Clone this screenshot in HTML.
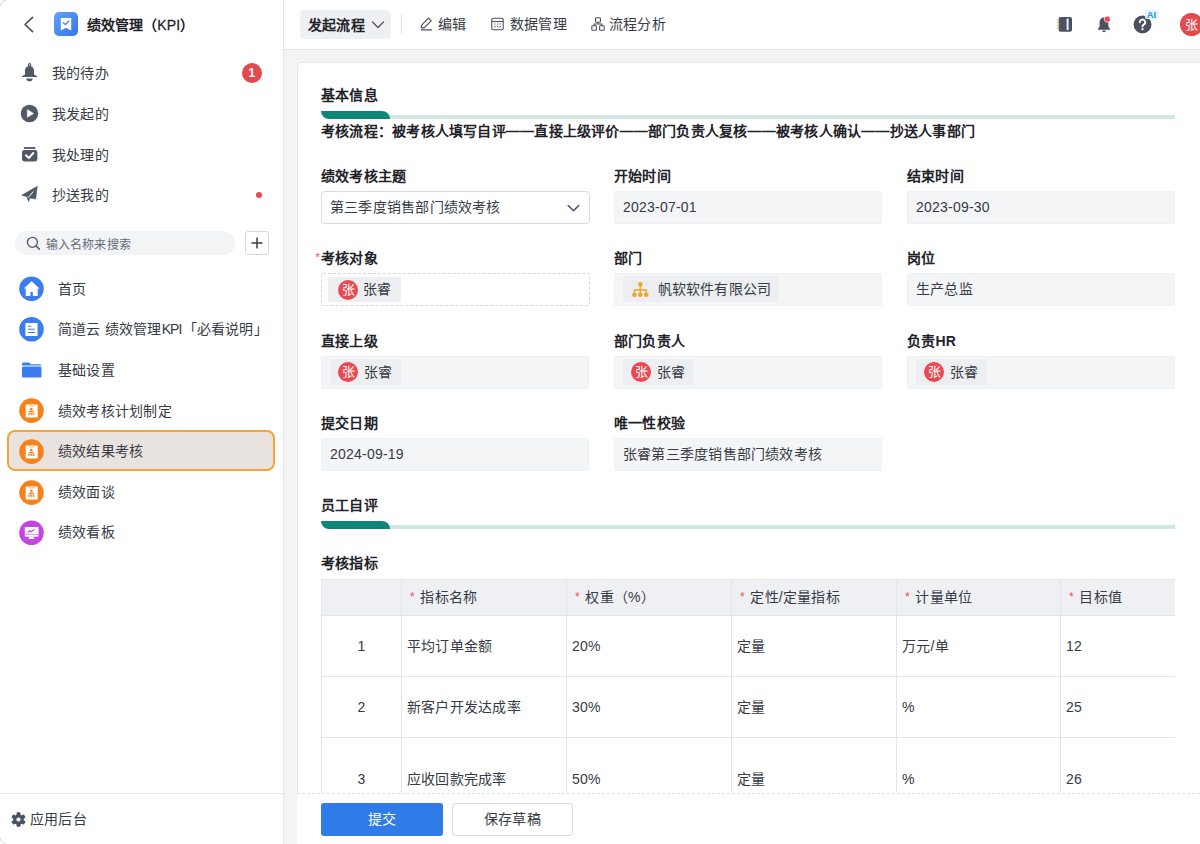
<!DOCTYPE html>
<html lang="zh-CN"><head><meta charset="utf-8">
<style>
*{box-sizing:border-box;margin:0;padding:0}
html,body{width:1200px;height:844px;overflow:hidden;background:#f3f4f6;font-family:"Liberation Sans",sans-serif;color:#1f2329;font-size:14px;letter-spacing:0.22px}
.abs{position:absolute}
#side{position:absolute;left:0;top:0;width:284px;height:844px;background:#fff;border-right:1px solid #e4e6ea;}
.mi{position:absolute;left:52px;font-size:14px;line-height:20px;color:#363b45;white-space:nowrap}
.ic{position:absolute}
#hdr{position:absolute;left:284px;top:0;width:916px;height:50px;background:#fff;border-bottom:1px solid #e4e6ea}
.ht{position:absolute;top:14px;font-size:14px;line-height:20px;color:#363b45;white-space:nowrap}
#card{position:absolute;left:297px;top:62px;width:920px;height:800px;background:#fff;border:1px solid #e6e8eb;border-radius:4px}
.sec{position:absolute;left:321px;font-size:14px;font-weight:bold;line-height:20px;color:#1f2329;white-space:nowrap}
.lbl{position:absolute;font-size:14px;font-weight:bold;line-height:20px;color:#1f2329;white-space:nowrap}
.fld{position:absolute;height:33px;width:268px;background:#f4f5f7;border:1px solid #eff0f3;border-radius:2px;font-size:14px;line-height:31px;padding-left:8px;color:#363b45;white-space:nowrap}
.chip{position:absolute;top:2px;left:7.5px;height:26px;background:#eceef1;border-radius:3px;padding:0 9px 0 8px;line-height:26px;font-size:14px;white-space:nowrap}
.chip.d{top:3px;left:5.5px;height:25px;line-height:25px;padding:0 10px;border-radius:1px}
.chip.d .av{margin-right:4.5px;margin-top:2.5px}
.av{display:inline-block;width:20.5px;height:20.5px;border-radius:50%;background:#e9494f;color:#fff;font-size:13px;line-height:20.5px;text-align:center;vertical-align:top;margin-top:2.75px;margin-right:6px;letter-spacing:0;text-indent:0.5px}
.tbar{position:absolute;left:321px;width:854px;height:4px;background:linear-gradient(90deg,transparent 0,transparent 60px,#cfe6e3 60px)}
.tbar i{position:absolute;left:0;bottom:0;width:69px;height:8px;background:#0b8677;border-radius:0 8px 0 8px}
table{border-collapse:collapse;position:absolute;left:321px;top:579px;table-layout:fixed}
td,th{border:1px solid #e3e5e8;font-size:14px;font-weight:normal;color:#363b45;text-align:left;padding-left:5px;white-space:nowrap;line-height:20px}
th{background:#eff0f3;height:36px;padding-left:8px}
th b{color:#ef4f4f;font-weight:normal;font-size:12px;margin-right:5.5px;position:relative;top:-1px}
td{height:61px}
</style></head><body>

<div id="side">
  <svg class="ic" style="left:0;top:0" width="8" height="8" viewBox="0 0 8 8"><path d="M0.5 6 A5.5 5.5 0 0 1 6 0.5" fill="none" stroke="#d9dbdf" stroke-width="1"/></svg>
  <svg class="ic" style="left:0;top:836px" width="8" height="8" viewBox="0 0 8 8"><path d="M0.5 2 A5.5 5.5 0 0 0 6 7.5" fill="none" stroke="#d9dbdf" stroke-width="1"/></svg>
  <!-- back chevron -->
  <svg class="ic" style="left:22px;top:15px" width="14" height="19" viewBox="0 0 14 19"><path d="M10.5 2.3 L3 9.5 L10.5 16.7" fill="none" stroke="#4b5160" stroke-width="1.7" stroke-linecap="round" stroke-linejoin="round"/></svg>
  <!-- app icon -->
  <svg class="ic" style="left:54px;top:12px" width="24" height="24" viewBox="0 0 24 24"><defs><linearGradient id="g1" x1="0" y1="0" x2="1" y2="1"><stop offset="0" stop-color="#67a3f8"/><stop offset="1" stop-color="#2f74ea"/></linearGradient></defs><rect width="24" height="24" rx="5" fill="url(#g1)"/><path d="M6.8 6 H17.2 V18.5 L12 15.8 L6.8 18.5 Z" fill="#fff"/><path d="M9.3 10.8 L11.3 12.6 L14.8 9.3" fill="none" stroke="#3d84ef" stroke-width="1.3" stroke-linecap="round" stroke-linejoin="round"/></svg>
  <div class="abs" style="left:86.5px;top:15px;font-size:14px;font-weight:bold;line-height:20px;color:#1f2329;white-space:nowrap;letter-spacing:0.15px">绩效管理（<span style="font-weight:normal;-webkit-text-stroke:0.3px #1f2329">KPI</span>）</div>

  <!-- my todo -->
  <svg class="ic" style="left:21px;top:63px" width="17" height="19" viewBox="0 0 17 19"><circle cx="8.5" cy="1.9" r="1.25" fill="none" stroke="#525866" stroke-width="1.1"/><path d="M8.5 2.9 C5.4 2.9 4 5.2 4 7.6 V11.4 L1 13.2 V14.1 H16 V13.2 L13 11.4 V7.6 C13 5.2 11.6 2.9 8.5 2.9 Z" fill="#525866"/><path d="M5.3 15.4 H11.7 A3.2 2.8 0 0 1 5.3 15.4 Z" fill="#525866"/></svg>
  <div class="mi" style="top:63px">我的待办</div>
  <div class="abs" style="left:242px;top:63px;width:20px;height:20px;border-radius:50%;background:#e5484d;color:#fff;font-size:12px;font-weight:bold;line-height:20px;text-align:center">1</div>

  <svg class="ic" style="left:20px;top:104px" width="19" height="19" viewBox="0 0 19 19"><circle cx="9.5" cy="9.5" r="8.7" fill="#525866"/><path d="M7.4 5.6 L13.6 9.5 L7.4 13.3 Z" fill="#fff" stroke="#fff" stroke-width="0.5" stroke-linejoin="round"/></svg>
  <div class="mi" style="top:104px">我发起的</div>

  <svg class="ic" style="left:21px;top:146px" width="17" height="17" viewBox="0 0 17 17"><rect x="2.9" y="0.9" width="11.6" height="2" rx="0.6" fill="#5d636f"/><rect x="1" y="4" width="15.4" height="11.5" rx="2.4" fill="#525866"/><path d="M4.9 9.3 L7.9 12 L12.3 7" fill="none" stroke="#fff" stroke-width="1.9" stroke-linecap="round" stroke-linejoin="round"/></svg>
  <div class="mi" style="top:145px">我处理的</div>

  <svg class="ic" style="left:21px;top:185px" width="17" height="17" viewBox="0 0 17 17"><path d="M16.3 1.2 L0.6 10.2 L5.9 11.7 L7.4 16.6 L9 13.1 L14.7 14.1 Z" fill="#525866" stroke="#525866" stroke-width="0.5" stroke-linejoin="round"/><path d="M12.2 6.6 L7.2 12.6" stroke="#fff" stroke-width="1"/></svg>
  <div class="mi" style="top:185px">抄送我的</div>
  <div class="abs" style="left:256px;top:192px;width:6px;height:6px;border-radius:50%;background:#e5484d"></div>

  <!-- search -->
  <div class="abs" style="left:15px;top:231px;width:220px;height:24px;border-radius:12px;background:#f3f4f6"></div>
  <svg class="ic" style="left:26px;top:236px" width="15" height="15" viewBox="0 0 15 15"><circle cx="6.4" cy="6.3" r="5" fill="none" stroke="#575d68" stroke-width="1.35"/><path d="M10 9.9 L13.4 13.3" stroke="#575d68" stroke-width="1.5" stroke-linecap="round"/></svg>
  <div class="abs" style="left:45.5px;top:236.5px;font-size:12px;line-height:16px;color:#656b76;white-space:nowrap">输入名称来搜索</div>
  <div class="abs" style="left:245px;top:231px;width:24px;height:24px;border:1px solid #d5d8dd;border-radius:3px"></div>
  <svg class="ic" style="left:250px;top:236px" width="14" height="14" viewBox="0 0 14 14"><path d="M7 1.5 V12.5 M1.5 7 H12.5" stroke="#3b3f48" stroke-width="1.5"/></svg>

  <!-- app menu -->
  <svg class="ic" style="left:19px;top:276px" width="25" height="25" viewBox="0 0 25 25"><circle cx="12.5" cy="12.8" r="12.3" fill="#3b7ded"/><path d="M12.6 5.3 L20.5 12.6 H18.7 V19.9 H13.8 V16 H11.4 V19.9 H6.7 V12.6 H4.8 Z" fill="#fff"/></svg>
  <div class="mi" style="left:58px;top:279px">首页</div>

  <svg class="ic" style="left:19px;top:317px" width="25" height="25" viewBox="0 0 25 25"><circle cx="12.5" cy="12.3" r="12.3" fill="#3b7ded"/><rect x="6.4" y="6" width="12.2" height="13" rx="0.6" fill="#fff"/><path d="M8.9 9.3 H12.3 M8.9 12.2 H15.9 M8.9 15.5 H15.9" stroke="#3b7ded" stroke-width="1"/></svg>
  <div class="mi" style="left:58px;top:319px">简道云 绩效管理<span style="letter-spacing:-0.9px;margin-right:1px">KPI</span>「必看说明」</div>

  <svg class="ic" style="left:22px;top:362px" width="20" height="16" viewBox="0 0 20 16"><path d="M1.5 0.5 H7.2 L8.8 2.3 H18 a1.5 1.5 0 0 1 1.5 1.5 V3.6 H0 V2 a1.5 1.5 0 0 1 1.5 -1.5z" fill="#3b7ded"/><rect x="0" y="4.4" width="19.5" height="11.1" rx="1.3" fill="#3b7ded"/></svg>
  <div class="mi" style="left:58px;top:360px">基础设置</div>

  <svg class="ic" style="left:19px;top:398px" width="25" height="25" viewBox="0 0 25 25"><circle cx="12.5" cy="12.6" r="12.3" fill="#f7821a"/><rect x="6.7" y="6.6" width="12" height="12.8" rx="0.4" fill="#fff"/><rect x="10.2" y="5.9" width="5" height="1.9" rx="0.9" fill="#fff" stroke="#f7821a" stroke-width="0.6"/><circle cx="12.3" cy="11" r="1.3" fill="#f7821a"/><path d="M10.1 12.8 H14.6 L15.7 16.7 H9 Z" fill="#f7821a"/><path d="M9 14.6 H15.7 M11.2 14.6 V16.8 M13.5 14.6 V16.8" stroke="#fff" stroke-width="0.6"/></svg>
  <div class="mi" style="left:58px;top:401px">绩效考核计划制定</div>

  <div class="abs" style="left:7px;top:430px;width:268px;height:41px;border-radius:8px;background:#e8e3de;border:2px solid #f6a43a"></div>
  <svg class="ic" style="left:19px;top:439px" width="25" height="25" viewBox="0 0 25 25"><circle cx="12.5" cy="12.6" r="12.3" fill="#f7821a"/><rect x="6.7" y="6.6" width="12" height="12.8" rx="0.4" fill="#fff"/><rect x="10.2" y="5.9" width="5" height="1.9" rx="0.9" fill="#fff" stroke="#f7821a" stroke-width="0.6"/><circle cx="12.3" cy="11" r="1.3" fill="#f7821a"/><path d="M10.1 12.8 H14.6 L15.7 16.7 H9 Z" fill="#f7821a"/><path d="M9 14.6 H15.7 M11.2 14.6 V16.8 M13.5 14.6 V16.8" stroke="#fff" stroke-width="0.6"/></svg>
  <div class="mi" style="left:58px;top:441px">绩效结果考核</div>

  <svg class="ic" style="left:19px;top:480px" width="25" height="25" viewBox="0 0 25 25"><circle cx="12.5" cy="12.6" r="12.3" fill="#f7821a"/><rect x="6.7" y="6.6" width="12" height="12.8" rx="0.4" fill="#fff"/><rect x="10.2" y="5.9" width="5" height="1.9" rx="0.9" fill="#fff" stroke="#f7821a" stroke-width="0.6"/><circle cx="12.3" cy="11" r="1.3" fill="#f7821a"/><path d="M10.1 12.8 H14.6 L15.7 16.7 H9 Z" fill="#f7821a"/><path d="M9 14.6 H15.7 M11.2 14.6 V16.8 M13.5 14.6 V16.8" stroke="#fff" stroke-width="0.6"/></svg>
  <div class="mi" style="left:58px;top:482px">绩效面谈</div>

  <svg class="ic" style="left:19px;top:520px" width="25" height="25" viewBox="0 0 25 25"><circle cx="12.5" cy="12.7" r="12.3" fill="#c445e0"/><rect x="5.8" y="7.1" width="13.7" height="9.6" rx="0.4" fill="#fff"/><path d="M5.8 14.4 H19.5" stroke="#c445e0" stroke-width="0.6"/><path d="M9 12.3 L10.9 10.5 L12.3 11.9 L15.2 9.4" fill="none" stroke="#c445e0" stroke-width="1.1" stroke-linecap="round" stroke-linejoin="round"/><path d="M10.5 16.7 H14.3 L15.7 18.9 H9.1 Z" fill="#fff"/></svg>
  <div class="mi" style="left:58px;top:522px">绩效看板</div>

  <!-- bottom -->
  <div class="abs" style="left:0;top:793px;width:283px;height:1px;background:#e4e6ea"></div>
  <svg class="ic" style="left:11px;top:812px" width="15" height="15" viewBox="0 0 15 15"><g fill="#4b5160" transform="translate(7.5 7.5)"><circle r="5.2"/><rect x="-1.9" y="-7.2" width="3.8" height="3.4" rx="0.6"/><rect x="-1.9" y="-7.2" width="3.8" height="3.4" rx="0.6" transform="rotate(60)"/><rect x="-1.9" y="-7.2" width="3.8" height="3.4" rx="0.6" transform="rotate(120)"/><rect x="-1.9" y="-7.2" width="3.8" height="3.4" rx="0.6" transform="rotate(180)"/><rect x="-1.9" y="-7.2" width="3.8" height="3.4" rx="0.6" transform="rotate(240)"/><rect x="-1.9" y="-7.2" width="3.8" height="3.4" rx="0.6" transform="rotate(300)"/></g><circle cx="7.5" cy="7.5" r="2.1" fill="#fff"/></svg>
  <div class="abs" style="left:30px;top:809px;font-size:14px;line-height:20px;color:#363b45;white-space:nowrap">应用后台</div>
</div>

<div id="hdr">
  <div class="abs" style="left:16px;top:10px;width:91px;height:29px;border-radius:4px;background:#eef0f3"></div>
  <div class="ht" style="left:24px;top:15px;font-weight:bold;color:#1f2329">发起流程</div>
  <svg class="ic" style="left:87px;top:20px" width="14" height="10" viewBox="0 0 14 10"><path d="M1.5 2 L7 7.5 L12.5 2" fill="none" stroke="#4b5160" stroke-width="1.2" stroke-linecap="round" stroke-linejoin="round"/></svg>
  <div class="abs" style="left:117px;top:14px;width:1px;height:20px;background:#dcdfe4"></div>
  <svg class="ic" style="left:136px;top:17px" width="13" height="14" viewBox="0 0 13 14"><path d="M1 12.8 H12 M1.3 10.8 L1.6 8.2 L8.6 1.2 L11.2 3.8 L4.2 10.8 Z" fill="none" stroke="#4b5160" stroke-width="1.2" stroke-linejoin="round"/></svg>
  <div class="ht" style="left:154px">编辑</div>
  <svg class="ic" style="left:207px;top:17px" width="13" height="14" viewBox="0 0 13 14"><rect x="0.8" y="1.3" width="11.4" height="11.4" rx="1.2" fill="none" stroke="#4b5160" stroke-width="1.1"/><path d="M1 4.5 H12" stroke="#4b5160" stroke-width="1.1"/><path d="M3.3 7 h1.2 M6 7 h1.2 M8.6 7 h1.2 M3.3 9.6 h1.2 M6 9.6 h1.2 M8.6 9.6 h1.2" stroke="#4b5160" stroke-width="1.1"/></svg>
  <div class="ht" style="left:226px">数据管理</div>
  <svg class="ic" style="left:307px;top:17px" width="14" height="14" viewBox="0 0 14 14"><rect x="4.6" y="0.8" width="4.8" height="4.4" rx="0.8" fill="none" stroke="#4b5160" stroke-width="1.1"/><rect x="0.8" y="8.8" width="4.6" height="4.4" rx="0.8" fill="none" stroke="#4b5160" stroke-width="1.1"/><rect x="8.6" y="8.8" width="4.6" height="4.4" rx="0.8" fill="none" stroke="#4b5160" stroke-width="1.1"/><path d="M7 5.2 V7 M3.1 8.8 V7 H10.9 V8.8" fill="none" stroke="#4b5160" stroke-width="1.1"/></svg>
  <div class="ht" style="left:325px">流程分析</div>

  <!-- right icons -->
  <svg class="ic" style="left:772px;top:16px" width="17" height="17" viewBox="0 0 17 17"><rect x="2.6" y="1" width="13.4" height="14.8" rx="2" fill="#4b5160"/><rect x="10.6" y="2.6" width="2" height="11.4" rx="0.5" fill="#eef5ff"/><path d="M0.9 4 h2.6 M0.9 6.7 h2.6 M0.9 9.4 h2.6 M0.9 12.1 h2.6" stroke="#dfa95a" stroke-width="0.9"/></svg>
  <svg class="ic" style="left:812.5px;top:16px" width="15" height="17" viewBox="0 0 15 17"><path d="M7 1.4 C4.3 1.4 2.6 3.6 2.6 6.4 V10.4 L0.9 13 V13.8 H13.1 V13 L11.4 10.4 V6.4 C11.4 3.6 9.7 1.4 7 1.4Z" fill="#4b5160"/><path d="M5.1 14.6 H8.9 A1.9 1.7 0 0 1 5.1 14.6Z" fill="#4b5160"/><circle cx="10.3" cy="3.2" r="3.1" fill="#e9494f" stroke="#fff" stroke-width="0.7"/></svg>
  <svg class="ic" style="left:849px;top:15px" width="19" height="19" viewBox="0 0 19 19"><circle cx="9.5" cy="9.5" r="9" fill="#4b5160"/><path d="M6.8 7.3 a2.7 2.7 0 1 1 3.8 2.4 c-0.8 0.4 -1.1 0.9 -1.1 1.7" fill="none" stroke="#fff" stroke-width="1.9" stroke-linecap="round"/><circle cx="9.5" cy="14.2" r="1.15" fill="#fff"/></svg>
  <div class="abs" style="left:860.5px;top:10px;width:14px;height:8.5px;border-radius:2px;background:#e3f5fa;font-size:9.5px;font-weight:bold;line-height:9px;text-align:center;letter-spacing:0;color:#2b95e0">AI</div>
  <div class="abs" style="left:896px;top:13px;width:23px;height:23px;border-radius:50%;background:#e5484d;color:#fff;font-size:13px;line-height:23px;text-align:center">张</div>
</div>

<div id="card"></div>

<div class="sec" style="top:85px">基本信息</div>
<div class="tbar" style="top:115px"><i></i></div>
<div class="sec" style="top:121px">考核流程：被考核人填写自评——直接上级评价——部门负责人复核——被考核人确认——抄送人事部门</div>

<div class="lbl" style="left:321px;top:166px">绩效考核主题</div>
<div class="fld" style="left:321px;top:191px;width:269px;background:#fff;border:1px solid #d9dce1;border-radius:4px">第三季度销售部门绩效考核
  <svg style="position:absolute;left:244.5px;top:12px" width="13" height="9" viewBox="0 0 13 9"><path d="M1.2 1.5 L6.5 6.8 L11.8 1.5" fill="none" stroke="#4b5160" stroke-width="1.45" stroke-linecap="round" stroke-linejoin="round"/></svg></div>
<div class="lbl" style="left:614px;top:166px">开始时间</div>
<div class="fld" style="left:614px;top:191px">2023-07-01</div>
<div class="lbl" style="left:907px;top:166px">结束时间</div>
<div class="fld" style="left:907px;top:191px">2023-09-30</div>

<div class="abs" style="left:315.5px;top:252px;font-size:11px;line-height:11px;color:#ef4f4f">*</div>
<div class="lbl" style="left:321px;top:248px">考核对象</div>
<div class="fld" style="left:321px;top:273px;width:269px;background:#fff;border:1px dashed #d3d6db"><div class="chip d"><span class="av">张</span>张睿</div></div>
<div class="lbl" style="left:614px;top:248px">部门</div>
<div class="fld" style="left:614px;top:273px"><div class="chip" style="padding-left:10px;padding-right:7px"><svg style="position:absolute;left:9.5px;top:5.5px" width="17" height="16" viewBox="0 0 17 16"><g fill="#f1a51d"><circle cx="8.3" cy="2.3" r="2.2"/><circle cx="2.4" cy="12.8" r="2.3"/><circle cx="8.3" cy="12.8" r="2.3"/><circle cx="14.2" cy="12.8" r="2.3"/></g><path d="M8.3 3 V12 M2.4 12 V8 H14.2 V12" fill="none" stroke="#f1a51d" stroke-width="1.3"/></svg><span style="margin-left:25px">帆软软件有限公司</span></div></div>
<div class="lbl" style="left:907px;top:248px">岗位</div>
<div class="fld" style="left:907px;top:273px">生产总监</div>

<div class="lbl" style="left:321px;top:331px">直接上级</div>
<div class="fld" style="left:321px;top:356px"><div class="chip"><span class="av">张</span>张睿</div></div>
<div class="lbl" style="left:614px;top:331px">部门负责人</div>
<div class="fld" style="left:614px;top:356px"><div class="chip"><span class="av">张</span>张睿</div></div>
<div class="lbl" style="left:907px;top:331px">负责HR</div>
<div class="fld" style="left:907px;top:356px"><div class="chip"><span class="av">张</span>张睿</div></div>

<div class="lbl" style="left:321px;top:413px">提交日期</div>
<div class="fld" style="left:321px;top:438px">2024-09-19</div>
<div class="lbl" style="left:614px;top:413px">唯一性校验</div>
<div class="fld" style="left:614px;top:438px">张睿第三季度销售部门绩效考核</div>

<div class="sec" style="top:495px">员工自评</div>
<div class="tbar" style="top:525px"><i></i></div>
<div class="lbl" style="left:321px;top:553px">考核指标</div>

<div class="abs" style="left:321px;top:579px;width:854px;height:214px;overflow:hidden">
<table style="left:0;top:0;width:905px">
<colgroup><col style="width:80px"><col style="width:165px"><col style="width:165px"><col style="width:165px"><col style="width:164px"><col style="width:165px"></colgroup>
<tr><th></th><th><b>*</b>指标名称</th><th><b>*</b>权重（%）</th><th><b>*</b>定性/定量指标</th><th><b>*</b>计量单位</th><th><b>*</b>目标值</th></tr>
<tr><td style="text-align:center;padding:0">1</td><td>平均订单金额</td><td>20%</td><td>定量</td><td>万元/单</td><td>12</td></tr>
<tr><td style="text-align:center;padding:0">2</td><td>新客户开发达成率</td><td>30%</td><td>定量</td><td>%</td><td>25</td></tr>
<tr><td style="text-align:center;padding:0;vertical-align:top;padding-top:31px">3</td><td style="vertical-align:top;padding-top:31px">应收回款完成率</td><td style="vertical-align:top;padding-top:31px">50%</td><td style="vertical-align:top;padding-top:31px">定量</td><td style="vertical-align:top;padding-top:31px">%</td><td style="vertical-align:top;padding-top:31px">26</td></tr>
</table>
</div>

<!-- footer -->
<div class="abs" style="left:297px;top:793px;width:903px;height:51px;background:#fff;border-top:1px dashed #dfe2e6"></div>
<div class="abs" style="left:321px;top:803px;width:122px;height:33px;border-radius:3px;background:#2f7ce8;color:#fff;font-size:14px;line-height:33px;text-align:center">提交</div>
<div class="abs" style="left:452px;top:803px;width:121px;height:33px;border-radius:3px;background:#fff;border:1px solid #d9dce1;color:#363b45;font-size:14px;line-height:31px;text-align:center">保存草稿</div>

</body></html>
